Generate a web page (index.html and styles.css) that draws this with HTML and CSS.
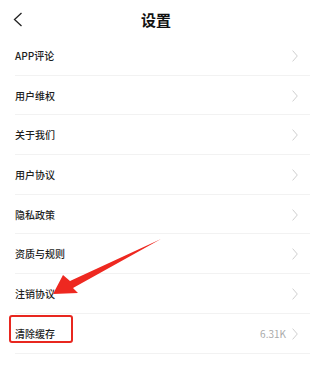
FILE: index.html
```html
<!DOCTYPE html>
<html lang="zh-CN">
<head>
<meta charset="utf-8">
<title>设置</title>
<link rel="stylesheet" href="styles.css">
</head>
<body>
<div class="page">
  <header class="topbar">
    <span class="back">
      <svg width="10" height="15" viewBox="0 0 10 15"><path d="M8.5 1 L1.5 7.5 L8.5 14" fill="none" stroke="#222" stroke-width="1.3"/></svg>
    </span>
    <h1 class="title">设置</h1>
    <span></span>
  </header>
  <ul class="list">
    <li class="row"><span class="label">APP评论</span><span class="right"><svg class="chev" width="6" height="12" viewBox="0 0 6 12"><path d="M0.6 0.6 L5.3 6 L0.6 11.4" fill="none" stroke="#cfcfcf" stroke-width="1"/></svg></span></li>
    <li class="row"><span class="label">用户维权</span><span class="right"><svg class="chev" width="6" height="12" viewBox="0 0 6 12"><path d="M0.6 0.6 L5.3 6 L0.6 11.4" fill="none" stroke="#cfcfcf" stroke-width="1"/></svg></span></li>
    <li class="row"><span class="label">关于我们</span><span class="right"><svg class="chev" width="6" height="12" viewBox="0 0 6 12"><path d="M0.6 0.6 L5.3 6 L0.6 11.4" fill="none" stroke="#cfcfcf" stroke-width="1"/></svg></span></li>
    <li class="row"><span class="label">用户协议</span><span class="right"><svg class="chev" width="6" height="12" viewBox="0 0 6 12"><path d="M0.6 0.6 L5.3 6 L0.6 11.4" fill="none" stroke="#cfcfcf" stroke-width="1"/></svg></span></li>
    <li class="row"><span class="label">隐私政策</span><span class="right"><svg class="chev" width="6" height="12" viewBox="0 0 6 12"><path d="M0.6 0.6 L5.3 6 L0.6 11.4" fill="none" stroke="#cfcfcf" stroke-width="1"/></svg></span></li>
    <li class="row"><span class="label">资质与规则</span><span class="right"><svg class="chev" width="6" height="12" viewBox="0 0 6 12"><path d="M0.6 0.6 L5.3 6 L0.6 11.4" fill="none" stroke="#cfcfcf" stroke-width="1"/></svg></span></li>
    <li class="row"><span class="label">注销协议</span><span class="right"><svg class="chev" width="6" height="12" viewBox="0 0 6 12"><path d="M0.6 0.6 L5.3 6 L0.6 11.4" fill="none" stroke="#cfcfcf" stroke-width="1"/></svg></span></li>
    <li class="row"><span class="label">清除缓存</span><span class="right"><span class="value">6.31K</span><svg class="chev" width="6" height="12" viewBox="0 0 6 12"><path d="M0.6 0.6 L5.3 6 L0.6 11.4" fill="none" stroke="#cfcfcf" stroke-width="1"/></svg></span></li>
  </ul>
  <div class="highlight"></div>
  <svg class="arrow" width="312" height="379" viewBox="0 0 312 379">
    <polygon points="161,239 70,281 63,275 53,294 78,293 73,288" fill="#ee2820"/>
  </svg>
</div>
</body>
</html>
```

FILE: styles.css
```css
* { box-sizing: border-box; }
html, body { margin: 0; padding: 0; background: #fff; }
body {
  font-family: "Noto Sans CJK SC", "Noto Sans", sans-serif;
  color: #222;
}
.page {
  position: relative;
  width: 312px;
  height: 379px;
  overflow: hidden;
  background: #fff;
}
.topbar {
  height: 36px;
  padding-top: 3px;
  display: grid;
  grid-template-columns: 1fr auto 1fr;
  align-items: center;
}
.back {
  padding-left: 13px;
  display: flex;
  align-items: center;
}
.title {
  margin: 0;
  font-size: 15px;
  font-weight: 700;
  color: #111;
  line-height: 1;
}
.list {
  list-style: none;
  margin: 0 2px 0 15px;
  padding: 0;
}
.row {
  height: 39.7px;
  border-bottom: 1px solid #f2f2f2;
  display: flex;
  align-items: center;
  justify-content: space-between;
  padding-right: 12px;
  padding-top: 1px;
}
.label {
  font-size: 10px;
  font-weight: 500;
  line-height: 1;
  color: #1e1e1e;
}
.right {
  display: flex;
  align-items: center;
  gap: 6px;
}
.value {
  font-size: 10px;
  line-height: 1;
  color: #aaa;
}
.chev { display: block; }
.highlight {
  position: absolute;
  left: 9px;
  top: 315px;
  width: 64px;
  height: 28px;
  border: 2px solid #e8271f;
  border-radius: 3px;
}
.arrow {
  position: absolute;
  left: 0;
  top: 0;
  pointer-events: none;
}
```
